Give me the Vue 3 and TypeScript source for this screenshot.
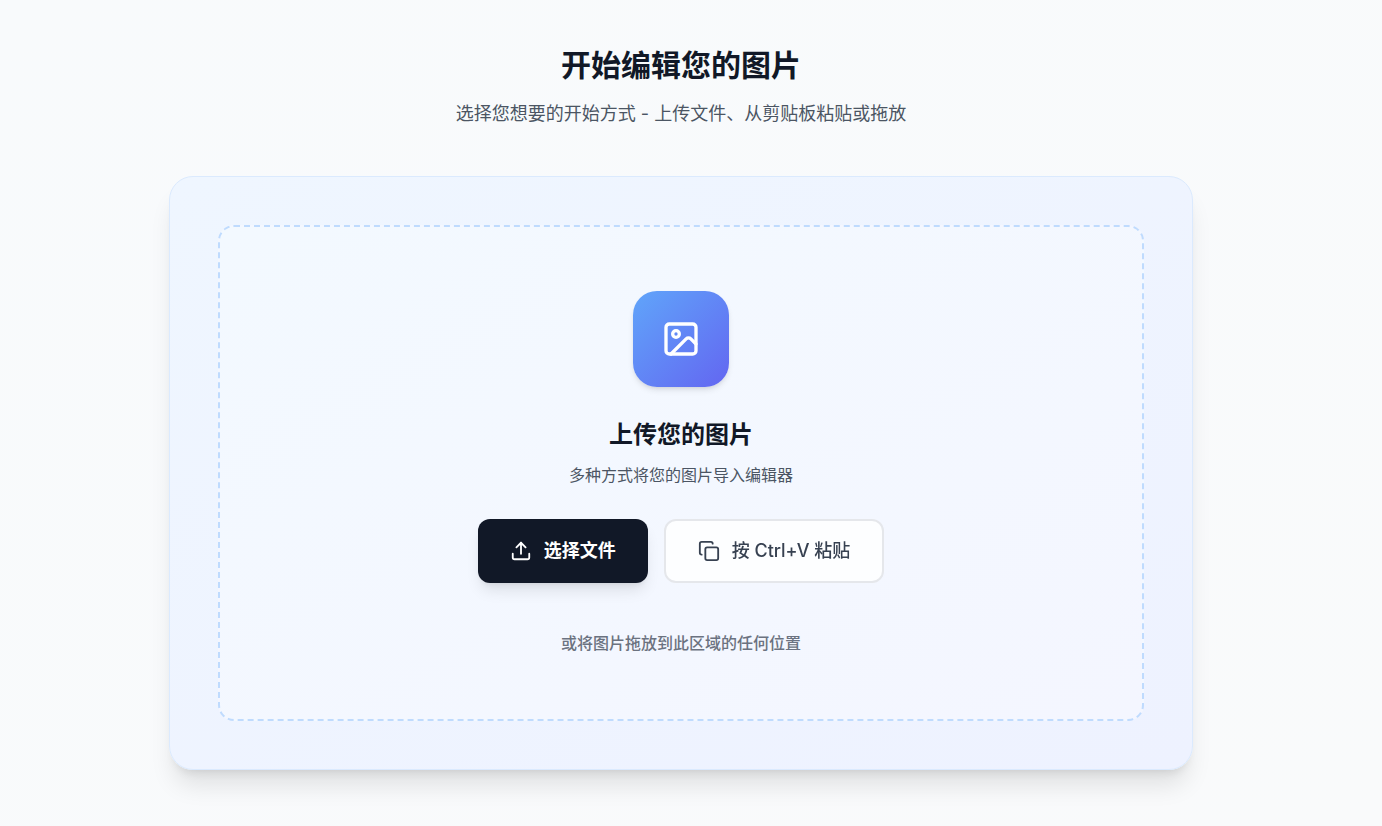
<script setup lang="ts">
import { ref } from 'vue'

const fileInput = ref<HTMLInputElement | null>(null)

function chooseFile(): void {
  fileInput.value?.click()
}
</script>

<template>
  <main class="page">
    <header class="intro">
      <h1>开始编辑您的图片</h1>
      <p>选择您想要的开始方式 - 上传文件、从剪贴板粘贴或拖放</p>
    </header>

    <section class="card">
      <div class="dropzone">
        <div class="badge">
          <svg width="40" height="40" viewBox="0 0 24 24" aria-hidden="true">
            <rect x="3" y="3" width="18" height="18" rx="2" />
            <circle cx="9" cy="9" r="2" />
            <path d="m21 15-3.086-3.086a2 2 0 0 0-2.828 0L6 21" />
          </svg>
        </div>
        <h2>上传您的图片</h2>
        <p class="lead">多种方式将您的图片导入编辑器</p>
        <div class="actions">
          <button type="button" class="btn primary" @click="chooseFile">
            <svg width="22" height="22" viewBox="0 0 24 24" aria-hidden="true">
              <path d="M21 15v4a2 2 0 0 1-2 2H5a2 2 0 0 1-2-2v-4" />
              <path d="m17 8-5-5-5 5" />
              <path d="M12 3v12" />
            </svg>
            选择文件
          </button>
          <button type="button" class="btn secondary">
            <svg width="22" height="22" viewBox="0 0 24 24" aria-hidden="true">
              <rect x="8" y="8" width="14" height="14" rx="2" />
              <path d="M4 16c-1.1 0-2-.9-2-2V4c0-1.1.9-2 2-2h10c1.1 0 2 .9 2 2" />
            </svg>
            按 Ctrl+V 粘贴
          </button>
        </div>
        <p class="hint">或将图片拖放到此区域的任何位置</p>
        <input ref="fileInput" type="file" accept="image/*" aria-label="选择文件" hidden />
      </div>
    </section>
  </main>
</template>

<style>
body {
  background: #f9fafb;
}
</style>

<style scoped>
.page {
  box-sizing: border-box;
  min-height: 100vh;
  padding: 48px 20px 56px 0;
  background: linear-gradient(to bottom right, #f8fafc, #f9fafb);
  font-family: Inter, "Noto Sans CJK SC", sans-serif;
  color: #111827;
}
h1,
h2,
p {
  margin: 0;
}
.intro {
  margin-bottom: 48px;
  text-align: center;
}
.intro h1 {
  margin-bottom: 18px;
  font-size: 30px;
  line-height: 34px;
  font-weight: 700;
}
.intro p {
  font-size: 18px;
  line-height: 28px;
  color: #4b5563;
}
.card {
  box-sizing: border-box;
  max-width: 1024px;
  margin: 0 auto;
  padding: 48px;
  border: 1px solid #dbeafe;
  border-radius: 24px;
  background: linear-gradient(to bottom right, #eff6ff, #eef2ff);
  box-shadow: 0 20px 25px -5px rgba(0, 0, 0, 0.1), 0 8px 10px -6px rgba(0, 0, 0, 0.1);
}
.dropzone {
  display: flex;
  flex-direction: column;
  align-items: center;
  padding: 64px;
  border: 2px dashed #bfdbfe;
  border-radius: 16px;
  background: linear-gradient(to bottom right, #f3f9ff, #f4f6ff);
  text-align: center;
}
svg {
  flex: none;
  fill: none;
  stroke: currentColor;
  stroke-width: 2;
  stroke-linecap: round;
  stroke-linejoin: round;
}
.badge {
  display: flex;
  align-items: center;
  justify-content: center;
  width: 96px;
  height: 96px;
  margin-bottom: 32px;
  border-radius: 24px;
  background: linear-gradient(to bottom right, #60a5fa, #6366f1);
  box-shadow: 0 4px 6px -1px rgba(0, 0, 0, 0.1), 0 2px 4px -2px rgba(0, 0, 0, 0.1);
  color: #fff;
}
.dropzone h2 {
  margin-bottom: 12px;
  font-size: 24px;
  line-height: 32px;
  font-weight: 700;
}
.lead,
.hint {
  font-size: 16px;
  line-height: 24px;
}
.lead {
  margin-bottom: 32px;
  color: #4b5563;
}
.actions {
  display: flex;
  flex-wrap: wrap;
  justify-content: center;
  gap: 16px;
  margin-bottom: 48px;
}
.btn {
  display: inline-flex;
  align-items: center;
  justify-content: center;
  gap: 12px;
  min-height: 64px;
  padding: 0 32px;
  border: 0;
  border-radius: 12px;
  font-family: inherit;
  font-size: 18px;
  line-height: 28px;
  cursor: pointer;
}
.primary {
  background: #111827;
  color: #fff;
  font-weight: 700;
  box-shadow: 0 10px 15px -3px rgba(0, 0, 0, 0.1), 0 4px 6px -4px rgba(0, 0, 0, 0.1);
}
.secondary {
  border: 2px solid #e5e7eb;
  background: rgba(255, 255, 255, 0.8);
  backdrop-filter: blur(4px);
  color: #374151;
  font-weight: 500;
}
.hint {
  font-weight: 500;
  color: #6b7280;
}
</style>
